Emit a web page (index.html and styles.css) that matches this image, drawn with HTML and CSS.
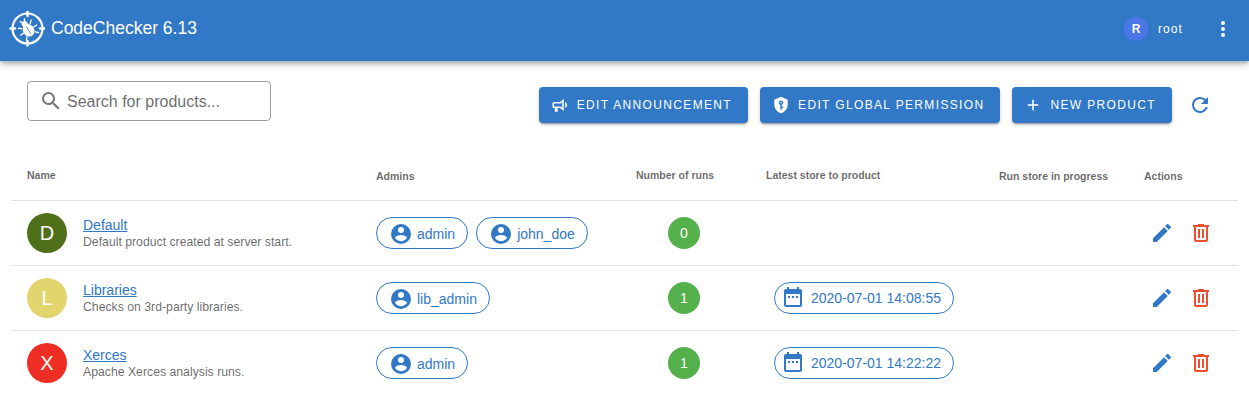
FILE: index.html
```html
<!DOCTYPE html>
<html lang="en">
<head>
  <meta charset="UTF-8" />
  <meta name="viewport" content="width=device-width, initial-scale=1.0" />
  <title>CodeChecker</title>
  <link rel="stylesheet" href="styles.css">
</head>
<body>
  <svg class="icon-defs" aria-hidden="true">
    <symbol id="i-search" viewBox="0 0 24 24"><path d="M9.5,3A6.5,6.5 0 0,1 16,9.5C16,11.11 15.41,12.59 14.44,13.73L14.71,14H15.5L20.5,19L19,20.5L14,15.5V14.71L13.73,14.44C12.59,15.41 11.11,16 9.5,16A6.5,6.5 0 0,1 3,9.5A6.5,6.5 0 0,1 9.5,3M9.5,5C7,5 5,7 5,9.5C5,12 7,14 9.5,14C12,14 14,12 14,9.5C14,7 12,5 9.5,5Z"/></symbol>
    <symbol id="i-bullhorn" viewBox="0 0 24 24"><path d="M12,8H4A2,2 0 0,0 2,10V14A2,2 0 0,0 4,16H5V20A1,1 0 0,0 6,21H8A1,1 0 0,0 9,20V16H12L17,20V4L12,8M15,15.6L13,14H4V10H13L15,8.4V15.6M21.5,12C21.5,13.71 20.54,15.26 19,16V8C20.53,8.75 21.5,10.3 21.5,12Z"/></symbol>
    <symbol id="i-shield" viewBox="0 0 24 24"><path d="M12,8A1,1 0 0,1 13,9A1,1 0 0,1 12,10A1,1 0 0,1 11,9A1,1 0 0,1 12,8M21,11C21,16.55 17.16,21.74 12,23C6.84,21.74 3,16.55 3,11V5L12,1L21,5V11M12,6A3,3 0 0,0 9,9C9,10.31 9.83,11.42 11,11.83V18H13V16H15V14H13V11.83C14.17,11.42 15,10.31 15,9A3,3 0 0,0 12,6Z"/></symbol>
    <symbol id="i-plus" viewBox="0 0 24 24"><path d="M19,13H13V19H11V13H5V11H11V5H13V11H19V13Z"/></symbol>
    <symbol id="i-refresh" viewBox="0 0 24 24"><path d="M17.65,6.35C16.2,4.9 14.21,4 12,4A8,8 0 0,0 4,12A8,8 0 0,0 12,20C15.73,20 18.84,17.45 19.73,14H17.65C16.83,16.33 14.61,18 12,18A6,6 0 0,1 6,12A6,6 0 0,1 12,6C13.66,6 15.14,6.69 16.22,7.78L13,11H20V4L17.65,6.35Z"/></symbol>
    <symbol id="i-dots" viewBox="0 0 24 24"><path d="M12,16A2,2 0 0,1 14,18A2,2 0 0,1 12,20A2,2 0 0,1 10,18A2,2 0 0,1 12,16M12,10A2,2 0 0,1 14,12A2,2 0 0,1 12,14A2,2 0 0,1 10,12A2,2 0 0,1 12,10M12,4A2,2 0 0,1 14,6A2,2 0 0,1 12,8A2,2 0 0,1 10,6A2,2 0 0,1 12,4Z"/></symbol>
    <symbol id="i-account" viewBox="0 0 24 24"><path d="M12,19.2C9.5,19.2 7.29,17.92 6,16C6.03,14 10,12.9 12,12.9C14,12.9 17.97,14 18,16C16.71,17.92 14.5,19.2 12,19.2M12,5A3,3 0 0,1 15,8A3,3 0 0,1 12,11A3,3 0 0,1 9,8A3,3 0 0,1 12,5M12,2A10,10 0 0,0 2,12A10,10 0 0,0 12,22A10,10 0 0,0 22,12A10,10 0 0,0 12,2Z"/></symbol>
    <symbol id="i-calendar" viewBox="0 0 24 24"><path d="M9,10H7V12H9V10M13,10H11V12H13V10M17,10H15V12H17V10M19,3H18V1H16V3H8V1H6V3H5C3.89,3 3,3.9 3,5V19A2,2 0 0,0 5,21H19A2,2 0 0,0 21,19V5A2,2 0 0,0 19,3M19,19H5V8H19V19Z"/></symbol>
    <symbol id="i-pencil" viewBox="0 0 24 24"><path d="M20.71,7.04C21.1,6.65 21.1,6 20.71,5.63L18.37,3.29C18,2.9 17.35,2.9 16.96,3.29L15.12,5.12L18.87,8.87M3,17.25V21H6.75L17.81,9.93L14.06,6.18L3,17.25Z"/></symbol>
    <symbol id="i-trash" viewBox="0 0 24 24"><path d="M9,3V4H4V6H5V19A2,2 0 0,0 7,21H17A2,2 0 0,0 19,19V6H20V4H15V3H9M7,6H17V19H7V6M9,8V17H11V8H9M13,8V17H15V8H13Z"/></symbol>
  </svg>

  <header class="app-bar">
    <svg class="logo" viewBox="-0.5 0.5 36 36" aria-hidden="true">
      <circle cx="18" cy="18" r="15" fill="none" stroke="#fff" stroke-width="2.2"/>
      <path d="M18 1v4.5M18 30.5V35M1 18h4.5M30.5 18H35" stroke="#fff" stroke-width="2.4" stroke-linecap="round"/>
      <g transform="rotate(-32 18 18)">
        <ellipse cx="18" cy="20" rx="5.6" ry="6.6" fill="#fff"/>
        <circle cx="18" cy="12.6" r="3" fill="#fff"/>
        <path d="M13.5 15.5l-3.5-3M12.5 20H8M13.5 24.5l-3 3.2M22.5 15.5l3.5-3M23.5 20H28M22.5 24.5l3 3.2M16.8 10.4l-1.6-2.6M19.2 10.4l1.6-2.6" fill="none" stroke="#fff" stroke-width="1.3"/>
        <path d="M18 15.5v9" stroke="#3178c6" stroke-width="0.7"/>
      </g>
    </svg>
    <span class="app-title">CodeChecker 6.13</span>
    <div class="spacer"></div>
    <span class="user-avatar">R</span>
    <span class="user-name">root</span>
    <svg class="icon menu-dots"><use href="#i-dots"/></svg>
  </header>

  <main class="content">
    <div class="toolbar">
      <label class="search">
        <svg class="icon"><use href="#i-search"/></svg>
        <input type="text" placeholder="Search for products..." />
      </label>
      <div class="spacer"></div>
      <button class="btn"><svg class="icon"><use href="#i-bullhorn"/></svg>Edit announcement</button>
      <button class="btn"><svg class="icon"><use href="#i-shield"/></svg>Edit global permission</button>
      <button class="btn"><svg class="icon"><use href="#i-plus"/></svg>New product</button>
      <button class="refresh"><svg class="icon"><use href="#i-refresh"/></svg></button>
    </div>

    <table class="products">
      <colgroup>
        <col class="col-name"><col class="col-admins"><col class="col-runs"><col class="col-latest"><col class="col-progress"><col class="col-actions">
      </colgroup>
      <thead>
        <tr>
          <th class="raised">Name</th>
          <th>Admins</th>
          <th class="raised">Number of runs</th>
          <th class="raised">Latest store to product</th>
          <th>Run store in progress</th>
          <th>Actions</th>
        </tr>
      </thead>
      <tbody>
        <tr>
          <td>
            <div class="product">
              <span class="avatar avatar-d">D</span>
              <div>
                <a href="#" class="product-link">Default</a>
                <div class="product-desc">Default product created at server start.</div>
              </div>
            </div>
          </td>
          <td>
            <div class="chips">
              <span class="chip"><svg class="icon"><use href="#i-account"/></svg>admin</span>
              <span class="chip"><svg class="icon"><use href="#i-account"/></svg>john_doe</span>
            </div>
          </td>
          <td class="center"><span class="count">0</span></td>
          <td></td>
          <td></td>
          <td>
            <div class="actions">
              <button class="edit"><svg class="icon"><use href="#i-pencil"/></svg></button>
              <button class="delete"><svg class="icon"><use href="#i-trash"/></svg></button>
            </div>
          </td>
        </tr>
        <tr>
          <td>
            <div class="product">
              <span class="avatar avatar-l">L</span>
              <div>
                <a href="#" class="product-link">Libraries</a>
                <div class="product-desc">Checks on 3rd-party libraries.</div>
              </div>
            </div>
          </td>
          <td>
            <div class="chips">
              <span class="chip"><svg class="icon"><use href="#i-account"/></svg>lib_admin</span>
            </div>
          </td>
          <td class="center"><span class="count">1</span></td>
          <td><span class="chip chip-date"><svg class="icon"><use href="#i-calendar"/></svg>2020-07-01 14:08:55</span></td>
          <td></td>
          <td>
            <div class="actions">
              <button class="edit"><svg class="icon"><use href="#i-pencil"/></svg></button>
              <button class="delete"><svg class="icon"><use href="#i-trash"/></svg></button>
            </div>
          </td>
        </tr>
        <tr>
          <td>
            <div class="product">
              <span class="avatar avatar-x">X</span>
              <div>
                <a href="#" class="product-link">Xerces</a>
                <div class="product-desc">Apache Xerces analysis runs.</div>
              </div>
            </div>
          </td>
          <td>
            <div class="chips">
              <span class="chip"><svg class="icon"><use href="#i-account"/></svg>admin</span>
            </div>
          </td>
          <td class="center"><span class="count">1</span></td>
          <td><span class="chip chip-date"><svg class="icon"><use href="#i-calendar"/></svg>2020-07-01 14:22:22</span></td>
          <td></td>
          <td>
            <div class="actions">
              <button class="edit"><svg class="icon"><use href="#i-pencil"/></svg></button>
              <button class="delete"><svg class="icon"><use href="#i-trash"/></svg></button>
            </div>
          </td>
        </tr>
      </tbody>
    </table>
  </main>
</body>
</html>
```

FILE: styles.css
```css
body {
  font-family: "Liberation Sans", Arial, sans-serif;
  background-color: #fff;
  color: rgba(0, 0, 0, 0.87);
  margin: 0;
  overflow: hidden;
}

.icon-defs {
  display: none;
}

.icon {
  width: 24px;
  height: 24px;
  fill: currentColor;
  flex: none;
}

.spacer {
  flex: 1;
}

button {
  font-family: inherit;
  border: none;
  background: none;
  padding: 0;
  cursor: pointer;
}

/* APP BAR */
.app-bar {
  display: flex;
  align-items: center;
  height: 61px;
  padding: 0 14px 4px 9px;
  box-sizing: border-box;
  background-color: #3178c6;
  color: #fff;
  box-shadow: 0 2px 4px -1px rgba(0, 0, 0, 0.2), 0 4px 5px 0 rgba(0, 0, 0, 0.14), 0 1px 10px 0 rgba(0, 0, 0, 0.12);
}

.logo {
  width: 36px;
  height: 36px;
  margin-right: 6px;
}

.app-title {
  font-size: 17.5px;
}

.user-avatar {
  width: 24px;
  height: 24px;
  border-radius: 50%;
  background-color: #4a76e8;
  font-size: 12px;
  font-weight: 700;
  line-height: 24px;
  text-align: center;
}

.user-name {
  margin: 0 28px 0 10px;
  font-size: 12px;
  letter-spacing: 1.07px;
}

/* TOOLBAR */
.content {
  padding: 0 11px;
}

.toolbar {
  display: flex;
  align-items: flex-start;
  padding: 20px 20px 27px 16px;
}

.search {
  display: flex;
  align-items: center;
  gap: 4px;
  width: 244px;
  height: 40px;
  padding: 0 11px;
  box-sizing: border-box;
  border: 1px solid rgba(0, 0, 0, 0.38);
  border-radius: 4px;
  color: rgba(0, 0, 0, 0.54);
}

.search input {
  width: 100%;
  border: none;
  outline: none;
  padding: 1px 0 0;
  font-family: inherit;
  font-size: 16px;
}

.search input::placeholder {
  color: rgba(0, 0, 0, 0.6);
}

.btn {
  display: flex;
  align-items: center;
  height: 36px;
  margin: 6px 12px 0 0;
  padding: 0 16px 0 12px;
  border-radius: 4px;
  background-color: #3178c6;
  color: #fff;
  font-size: 12px;
  letter-spacing: 1.35px;
  text-transform: uppercase;
  box-shadow: 0 3px 1px -2px rgba(0, 0, 0, 0.2), 0 2px 2px 0 rgba(0, 0, 0, 0.14), 0 1px 5px 0 rgba(0, 0, 0, 0.12);
}

.btn .icon {
  width: 18px;
  height: 18px;
  margin-right: 8px;
}

.refresh {
  width: 36px;
  height: 36px;
  margin-top: 6px;
  padding: 6px;
  color: #3178c6;
  margin-left: -2px;
}

/* TABLE */
.products {
  width: 1227px;
  table-layout: fixed;
  border-collapse: separate;
  border-spacing: 0;
}

.col-name { width: 349px; }
.col-admins { width: 260px; }
.col-runs { width: 130px; }
.col-latest { width: 233px; }
.col-progress { width: 145px; }

.products th {
  height: 51px;
  box-sizing: border-box;
  padding: 2px 16px 0;
  border-bottom: 1px solid #e0e0e0;
  color: rgba(0, 0, 0, 0.6);
  font-size: 10.5px;
  font-weight: 700;
  text-align: left;
}

.products th.raised {
  padding-top: 0;
}

.products td {
  height: 65px;
  box-sizing: border-box;
  padding: 0 16px;
  border-bottom: 1px solid #e0e0e0;
  font-size: 14px;
}

.products tr:last-child td {
  border-bottom-color: transparent;
}

.products td.center {
  padding-right: 18px;
  text-align: center;
}

.product {
  display: flex;
  align-items: center;
  gap: 16px;
}

.avatar {
  width: 40px;
  height: 40px;
  border-radius: 50%;
  color: #fff;
  font-size: 20px;
  line-height: 40px;
  text-align: center;
  flex: none;
}

.avatar-d { background-color: #4f6f18; }
.avatar-l { background-color: #e2d56d; }
.avatar-x { background-color: #ee2d24; }

.product-link {
  color: #3178c6;
  font-size: 14px;
}

.product-desc {
  margin-top: 2px;
  color: rgba(0, 0, 0, 0.6);
  font-size: 12.25px;
}

.chips {
  display: flex;
  gap: 8px;
}

.chip {
  display: inline-flex;
  align-items: center;
  height: 32px;
  padding: 0 12px;
  box-sizing: border-box;
  border: 1px solid #3178c6;
  border-radius: 16px;
  color: #3178c6;
  font-size: 14px;
}

.chips .chip {
  padding-top: 2px;
}

.chip .icon {
  margin-right: 4px;
}

.chip-date {
  margin-left: 8px;
}

.chip-date .icon {
  margin: 0 6px 0 -6px;
}

.count {
  display: inline-block;
  width: 32px;
  height: 32px;
  border-radius: 50%;
  background-color: #53b04a;
  color: #fff;
  font-size: 14px;
  line-height: 32px;
  vertical-align: middle;
}

.actions {
  display: flex;
  gap: 3px;
}

.actions button {
  width: 36px;
  height: 36px;
  padding: 6px;
}

.edit { color: #3178c6; }
.delete { color: #ec5030; }
```
